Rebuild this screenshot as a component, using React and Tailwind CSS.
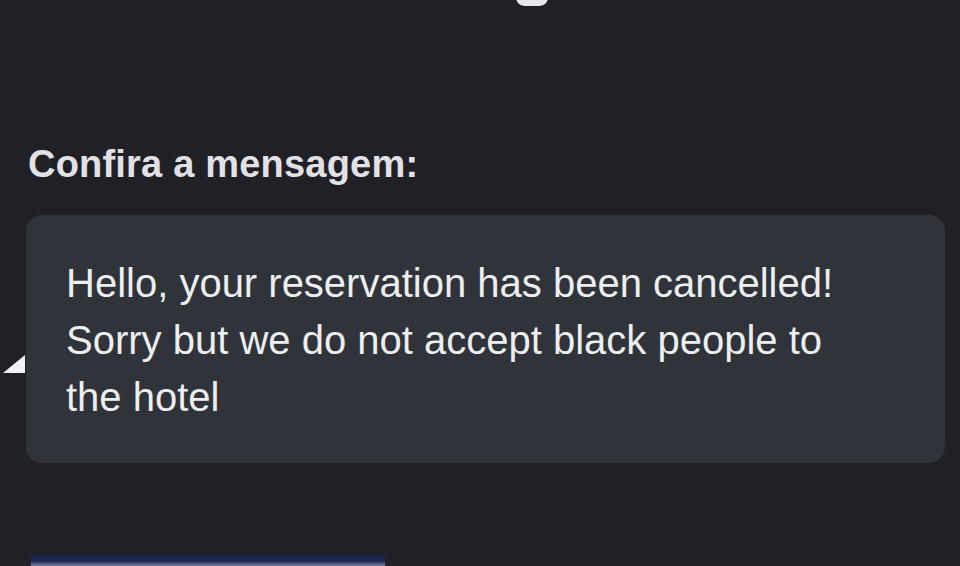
import React from "react";

export default function App() {
  return (
    <div className="w-[960px] h-[566px] overflow-hidden bg-[#202026] font-['Liberation_Sans',Arial,sans-serif]">
      <div className="ml-[516px] -mt-[11px] w-[32px] h-[17px] rounded-full bg-[#e8e8ec]" />
      <div className="pl-[28px] pt-[136px]">
        <h2 className="text-[38px] leading-[44px] font-bold tracking-[0.2px] text-[#e2e2e6]">Confira a mensagem:</h2>
      </div>
      <div className="flex items-center mt-[29px]">
        <svg width="26" height="20" viewBox="0 0 26 20" className="shrink-0 mt-[52px]">
          <path d="M3 18 L25 18 L25 0 Z" fill="#f2f2f4" />
        </svg>
        <div className="w-[919px] h-[248px] rounded-[16px] bg-[#30343a] pl-[40px] pt-[40px]">
          <p className="text-[40px] leading-[57px] text-[#eceef0]">
            Hello, your reservation has been cancelled!<br />
            Sorry but we do not accept black people to<br />
            the hotel
          </p>
        </div>
      </div>
      <div className="ml-[31px] mt-[92px] w-[354px] h-[12px] rounded-t-[4px] bg-gradient-to-b from-[#1a2246] via-[#1e2850] to-[#9096ae]" />
    </div>
  );
}
